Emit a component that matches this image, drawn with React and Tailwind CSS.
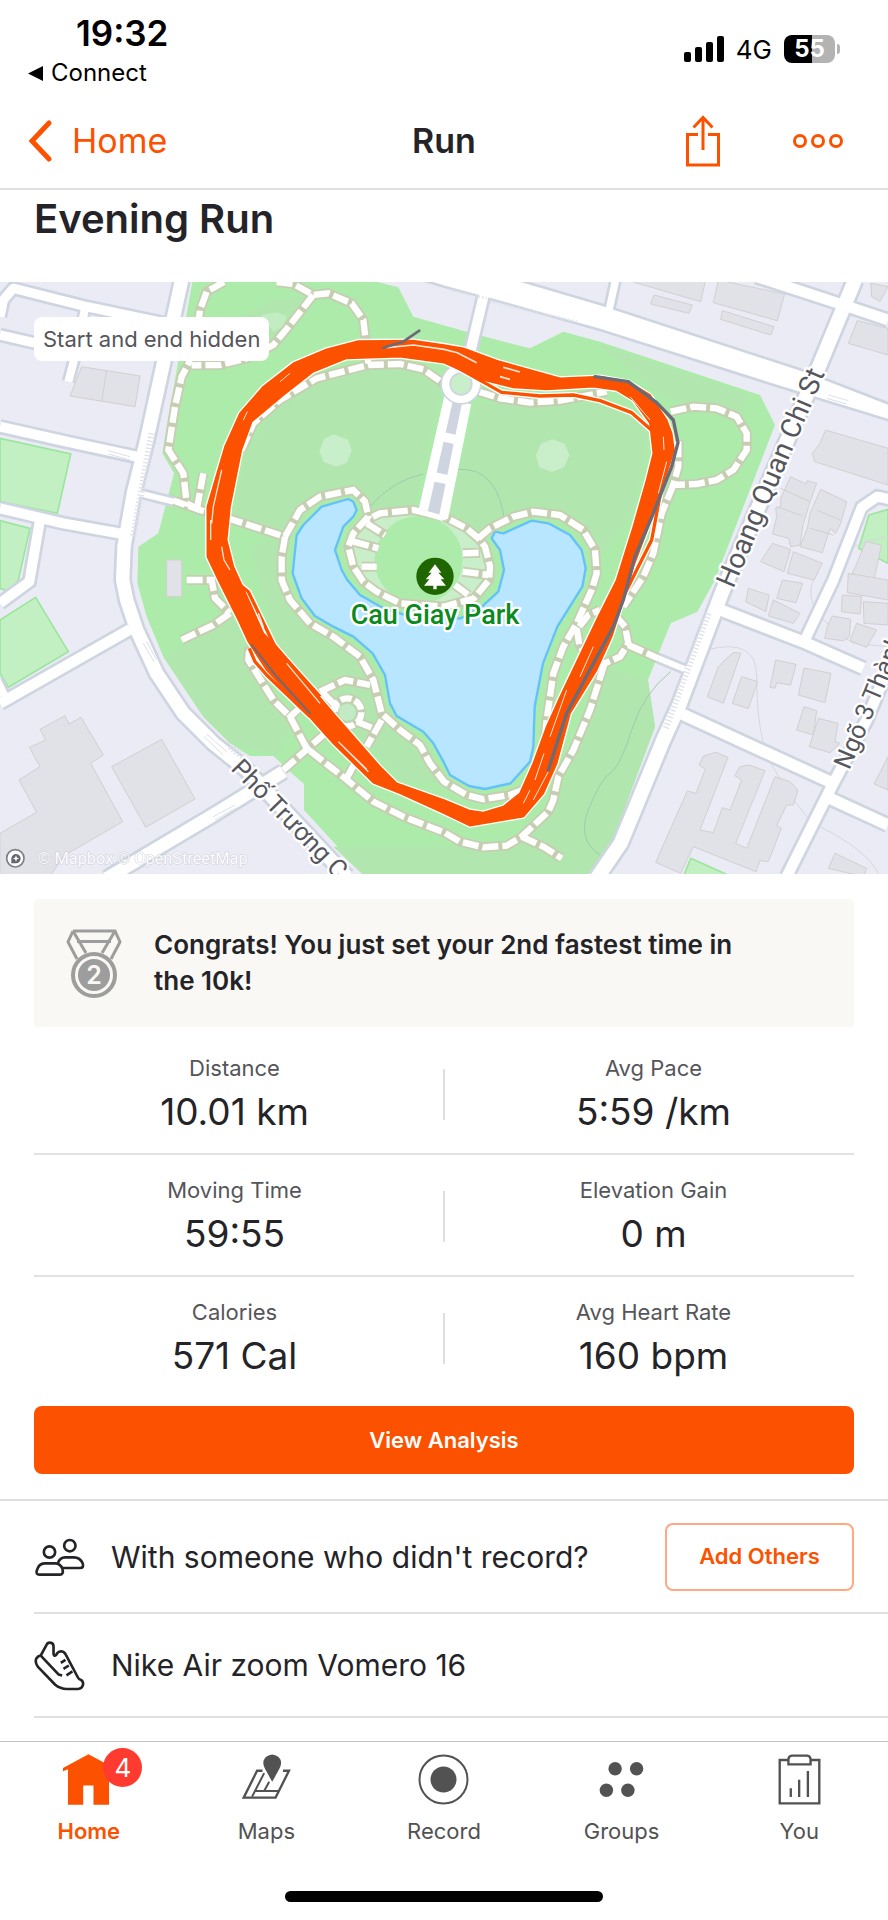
const stats = [
    [
        { label: "Distance", value: "10.01 km" },
        { label: "Avg Pace", value: "5:59 /km" },
    ],
    [
        { label: "Moving Time", value: "59:55" },
        { label: "Elevation Gain", value: "0 m" },
    ],
    [
        { label: "Calories", value: "571 Cal" },
        { label: "Avg Heart Rate", value: "160 bpm" },
    ],
];

const greens = [
    "0,475 212,522 172,700 0,665",
    "0,722 90,745 55,900 30,935 0,925",
    "0,1020 107,952 205,1115 25,1222 0,1180",
    "2072,1735 2195,1790 2050,1790",
    "2607,705 2664,688 2664,850 2576,805",
];

const buildings = [
    "245,260 420,288 405,380 210,348",
    "0,1660 110,1597 57,1500 120,1460 88,1402 137,1380 120,1348 195,1307 207,1332 243,1312 310,1425 272,1450 368,1625 190,1728 150,1790 0,1790",
    "335,1460 485,1378 585,1557 437,1642",
    "1907,0 2117,0 2102,65 1900,6",
    "1962,45 2077,75 2067,100 1952,72",
    "2155,0 2354,42 2332,122 2140,68",
    "2167,92 2322,140 2312,165 2162,118",
    "2572,122 2664,145 2664,225 2545,190",
    "2612,10 2664,20 2640,65 2615,50",
    "2477,450 2664,505 2664,615 2444,545 2437,520 2460,490",
    "2372,590 2418,612 2422,602 2450,610 2430,665 2408,738 2400,795 2372,800 2366,775 2317,762 2330,712 2327,685 2342,680 2342,655",
    "2462,628 2540,665 2522,730 2507,760 2490,745 2467,818 2400,800 2422,745 2430,700",
    "2317,790 2372,808 2352,875 2282,845",
    "2380,815 2467,850 2442,900 2362,880",
    "2597,785 2644,795 2622,900 2547,900 2575,840",
    "2347,900 2408,910 2388,968 2330,955",
    "2245,925 2307,945 2298,995 2237,965",
    "2320,960 2400,1000 2380,1030 2305,1008",
    "2545,880 2664,900 2664,960 2542,938",
    "2527,945 2585,950 2580,1002 2524,995",
    "2590,965 2664,970 2664,1035 2592,1030",
    "2497,1008 2552,1018 2548,1070 2530,1082 2474,1075 2482,1040",
    "2570,1030 2630,1050 2600,1102 2550,1082",
    "2202,1117 2222,1120 2170,1270 2122,1250 2155,1160 2185,1130",
    "2225,1190 2273,1205 2245,1286 2197,1270",
    "2327,1140 2388,1153 2372,1215 2330,1208 2325,1225 2310,1222",
    "2412,1164 2493,1180 2475,1268 2430,1255 2395,1245",
    "2412,1280 2450,1292 2440,1365 2390,1350",
    "2455,1315 2514,1330 2505,1385 2520,1390 2490,1418 2428,1400",
    "2148,1417 2184,1432 2100,1650 2140,1658 2167,1583 2190,1590 2225,1500 2204,1487 2220,1460 2247,1455 2295,1472 2207,1690 2240,1705 2325,1490 2370,1505 2394,1530 2380,1575 2360,1575 2330,1637 2344,1645 2305,1745 2280,1742 2268,1775 2080,1700 2042,1780 1967,1747 2062,1533 2088,1540 2116,1468 2097,1455 2110,1428",
    "2664,1430 2622,1512 2664,1530",
    "2505,1720 2600,1765 2590,1790 2485,1765",
    "500,840 545,840 545,950 500,950",
];

const roads = [
    { d: "M0 110L10 60L40 25L260 80L500 130", w: 28 },
    { d: "M0 165L110 190L235 205", w: 28 },
    { d: "M255 85L230 210L205 305", w: 24 },
    { d: "M0 440L200 485L410 530", w: 30 },
    { d: "M0 685L190 730L385 765", w: 30 },
    { d: "M120 720L88 905L0 970", w: 30 },
    { d: "M0 1270L390 1048", w: 32 },
    { d: "M-10 1200L15 1250", w: 24 },
    { d: "M320 1795L640 1605L850 1475", w: 38 },
    { d: "M545 0L440 480L400 640L372 800L368 900L380 960L410 1050L470 1180L550 1300L640 1390L740 1470L1040 1790", w: 40 },
    { d: "M2270 -10L2530 75L2664 120", w: 32 },
    { d: "M1847 0L1825 100", w: 22 },
    { d: "M1455 30L1410 220L1390 260", w: 30 },
    { d: "M420 640L520 665", w: 18 },
    { d: "M1975 1135L2060 1170", w: 18 },
    { d: "M2162 990L2420 1090L2590 1165", w: 34 },
    { d: "M2680 660L2632 650L2585 682L2500 900L2410 1090", w: 30 },
    { d: "M2042 1300L2270 1405L2500 1510", w: 34 },
    { d: "M2670 1150L2600 1320L2500 1510L2360 1790", w: 32 },
    { d: "M2490 1555L2664 1635", w: 34 },
    { d: "M2565 0L2440 300L2310 600L2165 940L2040 1270L1990 1380L1862 1690L1790 1795", w: 42 },
];

const trails = [
    "M672 6L620 35L600 90L590 160L566 250L545 290L525 380L505 510L550 580L560 670L600 690",
    "M610 580L592 680",
    "M510 658L600 690L700 720L855 770",
    "M830 6L880 12L940 45L985 40L1055 70L1090 120L1105 250",
    "M940 45L870 135L820 195L740 235L660 255L575 256",
    "M725 510L760 430L840 360L950 295L1105 255L1200 252L1270 268L1330 310",
    "M1437 335L1500 355L1590 368L1680 362L1820 335",
    "M2012 395L2080 380L2150 385L2210 410L2240 460L2240 510L2200 570L2150 600L2090 612L2020 615L2035 560L2035 480",
    "M2020 615L1985 700L1960 820L1930 890L1870 980",
    "M1812 1155L1770 1290L1720 1410L1675 1490L1660 1560L1645 1595L1565 1670L1520 1697L1450 1702L1380 1685L1332 1657L1210 1610L1120 1565L1035 1495L920 1405L870 1310L820 1260L770 1180L745 1140L748 1100",
    "M1565 1670L1630 1700L1685 1735",
    "M1885 1095L1975 1135",
    "M855 770L900 690L960 650L1060 630L1095 665L1105 710L1060 760L1045 800L1060 860L1090 905L1130 935L1200 970L1332 980L1422 955L1467 900L1470 860L1455 800L1435 775L1400 745L1332 710L1240 690L1140 700L1100 720",
    "M1435 775L1470 745L1540 710L1600 695L1680 705L1750 750L1785 810L1790 880L1775 930L1730 1030L1690 1100L1660 1180L1640 1320L1635 1370",
    "M855 770L845 830L845 900L870 960L930 1030L1000 1070L1080 1130L1120 1200L1145 1300L1200 1350L1260 1395L1290 1450L1332 1505L1400 1545L1450 1558L1530 1545L1580 1525",
    "M960 1235L1035 1200L1110 1215",
    "M970 1240L1020 1290",
    "M1070 1325L1120 1345",
    "M1145 1320L1100 1400",
    "M865 1315L910 1275",
    "M975 1360L850 1470",
    "M1040 1495L1075 1430",
    "M560 900L635 900L645 955L690 1000",
    "M690 1000L640 1035L545 1080",
    "M1730 1045L1738 1095L1765 1135L1810 1152L1860 1130L1885 1090L1875 1040L1845 1005",
    "M1738 1040L1765 1005L1800 990",
    "M1100 730L1155 765",
    "M1060 785L1135 805",
    "M1085 860L1130 860",
    "M1388 820L1440 818",
    "M1388 875L1465 885",
    "M1365 915L1405 945",
];

const footways = [
    "M1110 680Q1180 600 1270 582",
    "M1372 568Q1500 560 1515 740",
    "M2012 1175Q1930 1240 1895 1350T1830 1480T1765 1590T1800 1725",
    "M2120 1110Q2270 1070 2270 1190T2290 1390T2428 1620",
    "M2460 1640Q2600 1710 2635 1780",
    "M2440 900Q2400 990 2560 1090L2664 1100",
    "M2540 810Q2600 780 2664 770",
];

// all laps of the run merged into one band
const band =
    "M980 208L1075 183L1240 182L1332 195L1390 205L1500 245L1680 295L1800 290L1885 305L1950 345L2000 420L2015 460L2022 510L2000 580L1960 700L1900 860L1880 930L1835 1070L1790 1170L1710 1300L1670 1450L1630 1540L1570 1610L1450 1630L1410 1637L1332 1600L1200 1540L1120 1508L1000 1390L910 1290L800 1170L745 1085L715 1020L655 900L622 830V680L675 500L720 400L790 320L880 250Z M1040 235L940 275L850 345L755 425L724 510L690 680L680 780L700 860L750 970L790 1060L830 1100L1000 1300L1140 1460L1190 1510L1332 1560L1410 1592L1450 1598L1510 1580L1560 1540L1600 1450L1640 1340L1690 1230L1790 1020L1850 900L1900 740L1940 600L1960 520L1950 430L1900 360L1850 330L1780 320L1640 328L1540 322L1450 300L1332 248L1200 230Z";

const strands = [
    "M1340 245L1505 337L1620 348L1720 345L1800 362L1895 398L1960 455",
    "M1985 620L1955 780L1895 900L1840 1010",
    "M690 890L745 935L825 1100L960 1250",
    "M748 1105L765 1145L800 1185L930 1310",
    "M1700 1220L1680 1260L1650 1340L1630 1400",
];

const Map = () => {
    return (
        <svg
            viewBox="0 6 2664 1776"
            className="block w-full"
            fontFamily="Roboto, 'Noto Sans', sans-serif"
            role="img"
            aria-label="Route around Cau Giay Park"
        >
            <rect y="0" width="2664" height="1790" fill="#ebebf5" />
            <g fill="#c2f0c2" stroke="#9be69e" strokeWidth="5">
                {greens.map((p) => (
                    <polygon key={p} points={p} />
                ))}
            </g>

            {/* park */}
            <path
                fill="#adebab"
                d="M578 0H1110L1195 22L1240 110L1405 157L1590 205L1690 155L1800 185L2280 345L2325 435L2145 900L2092 995L2012 1030L1944 1200L1965 1340L1842 1670L1760 1790H1095L912 1590V1512L870 1475L820 1428H750L690 1390L610 1310L490 1130L440 1010L412 910L415 800L475 760L522 580L487 520L500 440Z"
            />
            <path
                fill="#b1e7af"
                d="M735 510L830 380L960 310L1110 270H1280L1325 330L1240 690L1110 690L1060 620L950 640L850 760L700 720Z M1430 370H1840L1950 450L1900 700L1790 850L1740 730L1590 690L1440 750L1340 700Z M600 170L820 60L930 45L820 190L580 240Z M1790 190L2240 340L2230 440L2080 380L1990 350Z M490 1130L700 1000L760 1180L880 1340L830 1428L690 1390L610 1310Z M1500 1700L1660 1600L1830 1160L1944 1200L1965 1340L1842 1670L1760 1790H1095L1000 1700L1400 1700Z M870 970L1100 1140L1160 1320L1330 1510L1200 1500L960 1230L830 1100L750 800L840 770Z"
            />
            <g fill="#c9eeca">
                <path d="M1000 463L1045 480L1055 512L1040 548L1008 560L970 545L958 512L972 478Z" />
                <path d="M1657 478L1695 492L1708 526L1692 562L1655 576L1618 562L1608 526L1622 492Z" />
                <path d="M785 105L830 96L860 108L850 140L820 155Z" opacity="0.7" />
                <path d="M1060 760L1110 715L1240 700L1332 715L1430 780L1462 880L1400 960L1250 975L1130 930L1050 850Z" />
            </g>
            <circle cx="1256" cy="840" r="132" fill="#adebab" />
            <g fill="none" stroke="#a3c9ae" strokeWidth="3">
                {footways.slice(0, 3).map((d) => (
                    <path key={d} d={d} />
                ))}
            </g>
            <g fill="none" stroke="#d6d8de" strokeWidth="3">
                {footways.slice(3).map((d) => (
                    <path key={d} d={d} />
                ))}
            </g>

            <path
                fill="#b8e5ff"
                stroke="#62c2fb"
                strokeWidth="7"
                strokeLinejoin="round"
                d="M1045 657L1060 665L1070 690L1060 710L1030 740L1005 810L1025 870L1042 900L1080 945L1150 985L1250 1015L1382 1015L1440 985L1495 935L1512 870L1500 810L1475 775L1485 755L1510 760L1595 722L1645 730L1710 765L1745 810L1757 865L1747 920L1672 1040L1629 1150L1604 1280L1600 1400L1590 1445L1532 1510L1455 1527L1407 1518L1350 1485L1332 1448L1300 1390L1270 1355L1190 1308L1170 1270L1155 1185L1118 1120L1060 1070L1000 1040L945 1008L905 955L885 900L878 880L890 765L910 735L965 680Z"
            />

            <g fill="#e1e2e7" stroke="#d3cfd0" strokeWidth="3">
                {buildings.map((p) => (
                    <polygon key={p} points={p} />
                ))}
                <path d="M320 272L305 364M2342 625L2430 665M2330 680L2408 708M2450 690L2520 720M2430 745L2500 765" />
            </g>

            {/* trails: casing first, then the white dashes */}
            <g fill="none" stroke="#c6ceb2" strokeWidth="30" strokeLinejoin="round">
                {trails.map((d) => (
                    <path key={d} d={d} />
                ))}
                <circle cx="1042" cy="1297" r="42" strokeWidth="26" />
            </g>
            <g fill="none" stroke="#fff" strokeWidth="19" strokeDasharray="48 12">
                {trails.map((d) => (
                    <path key={d} d={d} />
                ))}
                <circle cx="1042" cy="1297" r="42" strokeDasharray="34 10" />
            </g>
            <circle cx="1042" cy="1297" r="27" fill="#c2eac4" stroke="#b9d6b0" strokeWidth="3" />

            {/* streets */}
            <g fill="none" stroke="#ced5e1">
                {roads.map(({ d, w }) => (
                    <path key={d} d={d} strokeWidth={w + 16} />
                ))}
            </g>
            <path
                d="M1200 -20L1562 2L1800 72L2400 268L2670 372V422L2330 318L1800 150L1480 60L1332 20Z"
                fill="#fff"
                stroke="#ced5e1"
                strokeWidth="8"
            />
            <g fill="none" stroke="#fff" strokeLinejoin="round">
                {roads.map(({ d, w }) => (
                    <path key={d} d={d} strokeWidth={w} />
                ))}
            </g>

            {/* boulevard in the park */}
            <path d="M1332 350L1255 690L1330 718L1405 370Z" fill="#ced5e1" />
            <path d="M1348 345L1270 690M1400 370L1330 715M1328 470L1372 480M1300 590L1348 600" fill="none" stroke="#fff" strokeWidth="28" />
            <circle cx="1383" cy="312" r="46" fill="#c9eeca" stroke="#ced5e1" strokeWidth="32" />
            <circle cx="1383" cy="312" r="46" fill="none" stroke="#fff" strokeWidth="22" />
            <path d="M1240 690L1330 715" stroke="#fff" strokeWidth="16" />

            {/* crossings */}
            <g fill="none" stroke="#dfe1ea" strokeWidth="20" strokeDasharray="4 7">
                <path d="M455 460L400 770" />
                <path d="M2125 1000L1995 1350" />
                <path d="M1350 30L1460 55" strokeWidth="8" />
                <path d="M1470 65L1730 125" strokeWidth="8" />
                <path d="M690 1400L740 1440" />
            </g>
            <g fill="none" stroke="#dde0ea" strokeWidth="3">
                <path d="M325 512L390 530M325 522L390 540M430 1090L462 1145M440 1085L470 1140M612 1370L670 1425M620 1362L680 1415M640 1610L705 1575M645 1620L710 1583M2485 345L2545 362M2480 355L2540 372" />
            </g>

            {/* recorded track */}
            <g fill="none" stroke="#fff" strokeWidth="18" strokeLinejoin="round">
                {strands.map((d) => (
                    <path key={d} d={d} />
                ))}
                <path d={band} strokeWidth="13" />
            </g>
            <path d={band} fill="#fc5200" fillRule="evenodd" stroke="#fc5200" strokeWidth="5" strokeLinejoin="round" />
            <g fill="none" stroke="#fc5200" strokeWidth="10" strokeLinejoin="round">
                {strands.map((d) => (
                    <path key={d} d={d} />
                ))}
            </g>
            <g fill="none" stroke="#fff" strokeWidth="3" opacity="0.85">
                <path d="M1160 203L1240 195L1332 208L1372 218L1430 248M1510 262L1560 276M1500 290L1530 298" strokeWidth="5" />
                <path d="M635 730L640 680L665 570M632 780V720M665 800L672 840L690 870" strokeWidth="4" />
                <path d="M840 305L870 280M730 420L742 395M1990 470L1992 510M2000 545L1975 640M1890 350L1950 420" />
                <path d="M1015 1385L1100 1468M1030 1400L1105 1475M860 1150L960 1270M775 1000L790 1040" strokeWidth="4" />
                <path d="M1700 1230L1650 1370M1632 1420L1605 1500M1645 1475L1600 1560M1590 1530L1570 1570M1740 1190L1780 1100" />
            </g>
            <g fill="none" stroke="#6b6b78" strokeWidth="10" strokeLinejoin="round" strokeLinecap="round">
                <path d="M1785 290L1885 305L1970 368L2020 420L2034 488L2015 560L1960 700L1905 830L1870 960L1840 1040L1775 1160L1700 1300L1645 1470" />
                <path d="M1150 203L1210 185L1258 152" strokeWidth="8" />
                <path d="M755 1095L830 1190L930 1300" strokeWidth="6" />
            </g>

            {/* labels */}
            <g fill="#56565e" stroke="#fff" strokeWidth="14" strokeLinejoin="round" paintOrder="stroke" fontSize="84">
                <text transform="translate(2200 928) rotate(-67)">Hoang Quan Chi St</text>
                <text transform="translate(2548 1472) rotate(-67)" fontSize="76">
                    Ngõ 3 Thành
                </text>
                <text transform="translate(690 1468) rotate(46)" fontSize="76">
                    Phố Trương C
                </text>
            </g>
            <text
                x="1305"
                y="1032"
                textAnchor="middle"
                fontSize="81"
                fontWeight="500"
                fill="#0b8a1e"
                stroke="#fff"
                strokeWidth="14"
                strokeLinejoin="round"
                paintOrder="stroke"
            >
                Cau Giay Park
            </text>
            <circle cx="1305" cy="889" r="56" fill="#1f6500" />
            <path
                fill="#fff"
                d="M1305 853L1324 878H1315L1333 898H1322L1338 917H1310V928H1300V917H1272L1288 898H1277L1295 878H1286Z"
            />
            <circle cx="46" cy="1735" r="26" fill="#fff" stroke="#7e7e88" strokeWidth="5" />
            <path d="M34 1750V1735A14 14 0 1 1 48 1750Z" fill="#65656e" />
            <path d="M48 1726L51 1733L58 1735L51 1738L48 1745L45 1738L38 1735L45 1733Z" fill="#fff" />
            <text x="113" y="1752" fontSize="49" fill="#fff" stroke="#c9c9d4" strokeWidth="3" paintOrder="stroke" opacity="0.85">
                © Mapbox © OpenStreetMap
            </text>
        </svg>
    );
};

const StatusBar = () => {
    return (
        <div className="flex items-start justify-between pt-[13px] pl-7 pr-12 text-black">
            <div>
                <div className="pl-12 text-[35px] font-semibold leading-10">19:32</div>
                <a href="#" className="flex items-center gap-2 text-2xl leading-10">
                    <svg viewBox="0 0 15 15" className="h-[15px] w-[15px]">
                        <path d="M0 7.500L15 0V15Z" />
                    </svg>
                    Connect
                </a>
            </div>
            <div className="mt-4 flex h-10 items-center gap-3">
                <svg viewBox="0 0 40 26" className="h-[26px] w-10">
                    <rect x="0" y="16" width="7" height="10" rx="2" />
                    <rect x="11" y="11" width="7" height="15" rx="2" />
                    <rect x="22" y="6" width="7" height="20" rx="2" />
                    <rect x="33" y="0" width="7" height="26" rx="2" />
                </svg>
                <span className="text-[26px]">4G</span>
                <div className="flex items-center gap-0.5">
                    <div className="flex h-7 w-[51px] items-center justify-center rounded-lg bg-linear-to-r from-black from-55% to-[#b3b3b3] to-55% text-2xl font-bold text-white">
                        55
                    </div>
                    <div className="h-2.5 w-[3px] rounded-r-full bg-[#b3b3b3]"></div>
                </div>
            </div>
        </div>
    );
};

const Header = () => {
    return (
        <header className="grid h-[97px] grid-cols-3 items-center border-b-2 border-[#dfdfe0] pl-7 pr-11 text-[34px]">
            <a href="#" className="flex items-center gap-5 text-[#fc5200]">
                <svg viewBox="0 0 24 42" className="h-[42px] w-6" fill="none" stroke="currentColor" strokeWidth="5" strokeLinecap="round">
                    <path d="M21 3L4 21L21 39" />
                </svg>
                Home
            </a>
            <h2 className="pl-4 text-center font-semibold">Run</h2>
            <div className="flex items-center justify-end gap-[72px] text-[#fc5200]">
                <button type="button" aria-label="Share">
                    <svg viewBox="0 0 34 52" className="h-[52px] w-[34px]" fill="none" stroke="currentColor" strokeWidth="3">
                        <path d="M12 19.500H1.500V50H32.500V19.500H22M17 35V3M7.500 12.500L17 2.500L26.500 12.500" />
                    </svg>
                </button>
                <button type="button" aria-label="More">
                    <svg viewBox="0 0 52 16" className="h-4 w-[52px]" fill="none" stroke="currentColor" strokeWidth="3">
                        <circle cx="8" cy="8" r="5.500" />
                        <circle cx="26" cy="8" r="5.500" />
                        <circle cx="44" cy="8" r="5.500" />
                    </svg>
                </button>
            </div>
        </header>
    );
};

const Medal = () => {
    return (
        <svg viewBox="0 0 56 69" className="h-[69px] w-14" fill="none" stroke="#9d9d9d" strokeWidth="4">
            <path d="M7 2H49L54 13L45 30M7 2L2 13L11 30M7 2L20 24M49 2L36 24M11 12.500H45" strokeWidth="3" />
            <circle cx="28" cy="46" r="21" />
            <circle cx="28" cy="46" r="16" fill="#9d9d9d" stroke="none" />
            <text x="28" y="55" textAnchor="middle" fontSize="25" fontWeight="600" fill="#f9f8f4" stroke="none">
                2
            </text>
        </svg>
    );
};

const Stat = ({ label, value }) => {
    return (
        <div className="flex-1 text-center">
            <div className="text-[22px] leading-7 text-[#55555a]">{label}</div>
            <div className="mt-2 text-[37px] leading-[44px]">{value}</div>
        </div>
    );
};

const PeopleIcon = () => {
    return (
        <svg viewBox="45 50 152 120" className="h-10 w-[51px]" fill="none" stroke="currentColor" strokeWidth="8">
            <circle cx="91" cy="95" r="17" />
            <circle cx="152" cy="76" r="17" />
            <path d="M76 129H108Q124 129 130 146Q134 163 122 163H61Q49 163 53 150Q59 129 76 129Z" />
            <path d="M116 129Q122 111 138 111H164Q182 111 190 128Q196 143 182 143H131" />
        </svg>
    );
};

const ShoeIcon = () => {
    return (
        <svg viewBox="43 360 154 154" className="h-[51px] w-[51px]" fill="none" stroke="currentColor" strokeWidth="8" strokeLinejoin="round">
            <path d="M64 406L80 376Q84 367 92 368Q102 369 102 380V402Q103 411 110 405Q115 395 124 394Q134 394 139 404L176 474Q179 480 186 481Q194 487 190 498Q187 507 176 508H142Q122 507 107 495L55 441Q45 428 50 416Q55 408 64 406Z" />
            <path d="M64 408L117 464L128 467M124 429L138 420M132 447L148 437M141 467L159 455" />
        </svg>
    );
};

const HomeIcon = () => {
    return (
        <svg viewBox="189 43 154 152" className="h-[51px] w-[51px]" fill="currentColor">
            <path d="M189 84L266 43L343 84V94L328 88V195H281V137H250V195H204V88L189 94Z" />
        </svg>
    );
};

const MapsIcon = () => {
    return (
        <svg viewBox="724 43 152 152" className="h-[51px] w-[51px]" fill="none" stroke="currentColor" strokeWidth="6">
            <path d="M788 93H772L732 173H827L867 93H849" strokeWidth="7" />
            <path d="M793 100L757 170M765 153H836M808 126L793 153" />
            <path d="M817 126L796 88Q784 66 798 52Q817 37 836 52Q850 66 838 88Z" fill="currentColor" stroke="none" />
        </svg>
    );
};

const RecordIcon = () => {
    return (
        <svg viewBox="0 0 51 51" className="h-[51px] w-[51px]" fill="none" stroke="currentColor" strokeWidth="2">
            <circle cx="25.500" cy="25.500" r="24" />
            <circle cx="25.500" cy="25.500" r="13" fill="currentColor" stroke="none" />
        </svg>
    );
};

const GroupsIcon = () => {
    return (
        <svg viewBox="451 43 152 152" className="h-[51px] w-[51px]" fill="currentColor">
            <circle cx="508" cy="87" r="20" />
            <circle cx="572" cy="87" r="20" />
            <circle cx="482" cy="151" r="20" />
            <circle cx="546" cy="151" r="20" />
        </svg>
    );
};

const YouIcon = () => {
    return (
        <svg viewBox="983 43 152 152" className="h-[51px] w-[51px]" fill="none" stroke="currentColor" strokeWidth="7">
            <path d="M1026 61H1000V190H1118V61H1092" />
            <path d="M1026 74V58Q1027 49 1036 48H1082Q1091 49 1092 58V74Z" />
            <path d="M1033 171V145M1058 171V120M1084 171V94" />
        </svg>
    );
};

const tabs = [
    { name: "Home", Icon: HomeIcon, active: true, badge: 4 },
    { name: "Maps", Icon: MapsIcon },
    { name: "Record", Icon: RecordIcon },
    { name: "Groups", Icon: GroupsIcon },
    { name: "You", Icon: YouIcon },
];

const TabBar = () => {
    return (
        <footer className="sticky bottom-0 border-t border-[#c4c4c6] bg-white">
            <nav className="grid grid-cols-5">
                {tabs.map(({ name, Icon, active, badge }) => (
                    <a
                        key={name}
                        href="#"
                        className={
                            active
                                ? "flex flex-col items-center pt-3 text-[22px] font-semibold text-[#fc5200]"
                                : "flex flex-col items-center pt-3 text-[22px] text-[#525252]"
                        }
                    >
                        <span className="relative">
                            <Icon />
                            {badge && (
                                <span className="absolute -right-7 -top-1.5 flex h-[39px] w-[39px] items-center justify-center rounded-full bg-[#ff3b30] text-[26px] font-normal text-white">
                                    {badge}
                                </span>
                            )}
                        </span>
                        <span className="mt-2.5 leading-8">{name}</span>
                    </a>
                ))}
            </nav>
            <div className="mx-auto mt-11 mb-[18px] h-[11px] w-[318px] rounded-full bg-black"></div>
        </footer>
    );
};

const App = () => {
    return (
        <div className="flex min-h-screen flex-col bg-white font-[Inter,'Liberation_Sans',sans-serif] text-[#242428]">
            <StatusBar />
            <Header />
            <main className="flex-1 pb-[23px]">
                <h1 className="px-[34px] pt-1 pb-[38px] text-[40px] font-semibold leading-[50px]">Evening Run</h1>
                <div className="relative">
                    <Map />
                    <span className="absolute left-[34px] top-[35px] rounded-lg bg-white px-[9px] text-[22px] leading-[44px] text-[#55555a]">
                        Start and end hidden
                    </span>
                </div>

                <div className="px-[34px]">
                    <div className="mt-[25px] flex items-center gap-8 rounded bg-[#f9f8f4] py-7 pl-8 pr-24">
                        <Medal />
                        <p className="flex-1 text-[26px] font-semibold leading-9">
                            Congrats! You just set your 2nd fastest time in the 10k!
                        </p>
                    </div>

                    <div className="mt-1.5 divide-y-2 divide-[#e1e1e8]">
                        {stats.map(([left, right]) => (
                            <div key={left.label} className="flex h-[122px] gap-2 pt-[21px]">
                                <Stat {...left} />
                                <div className="mt-[15px] h-[51px] w-0.5 bg-[#dfdfe3]"></div>
                                <Stat {...right} />
                            </div>
                        ))}
                    </div>

                    <button type="button" className="mt-[7px] h-[68px] w-full rounded-lg bg-[#fc5200] text-[22px] font-semibold text-white">
                        View Analysis
                    </button>
                </div>

                <div className="mt-[25px] border-t-2 border-[#dfdfe0]">
                    <div className="ml-[34px] flex h-[113px] items-center gap-[26px] border-b-2 border-[#dfdfe0] pr-[34px] text-3xl">
                        <PeopleIcon />
                        <span className="flex-1">With someone who didn't record?</span>
                        <button type="button" className="h-[68px] w-[189px] rounded-lg border-2 border-[#ffa883] text-[22px] font-semibold text-[#fc5200]">
                            Add Others
                        </button>
                    </div>
                    <div className="ml-[34px] flex h-[104px] items-center gap-[26px] border-b-2 border-[#dfdfe0] pr-[34px] text-3xl">
                        <ShoeIcon />
                        <span className="flex-1">Nike Air zoom Vomero 16</span>
                    </div>
                </div>
            </main>
            <TabBar />
        </div>
    );
};

export default App;
